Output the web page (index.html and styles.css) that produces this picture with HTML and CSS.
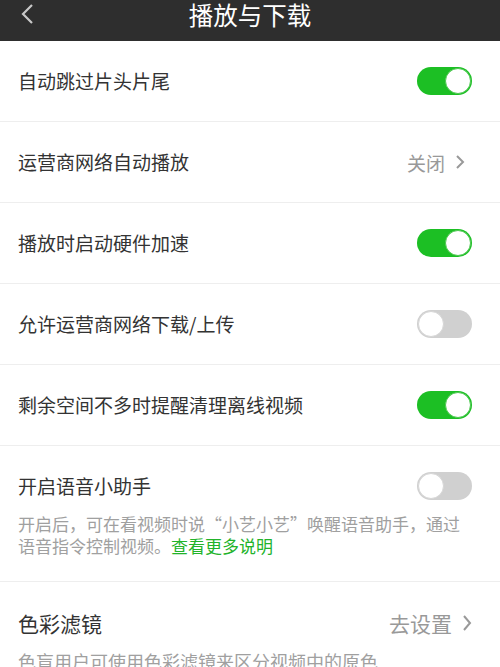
FILE: index.html
```html
<!DOCTYPE html>
<html>
<head>
    <title>播放与下载</title>
    <link rel="stylesheet" href="styles.css">
</head>
<body>
    <div class="header">
        <svg class="back" width="14" height="22" viewBox="0 0 14 22">
            <polyline points="12,2 3,11 12,20" fill="none" stroke="#c8c8c8" stroke-width="2.2"/>
        </svg>
        <span class="title">播放与下载</span>
    </div>

    <div class="row">
        <span class="label">自动跳过片头片尾</span>
        <span class="switch on"></span>
    </div>
    <div class="row">
        <span class="label">运营商网络自动播放</span>
        <span class="value">关闭
            <svg class="arrow" width="10" height="16" viewBox="0 0 10 16">
                <polyline points="2,2 8,8 2,14" fill="none" stroke="#999" stroke-width="2"/>
            </svg>
        </span>
    </div>
    <div class="row">
        <span class="label">播放时启动硬件加速</span>
        <span class="switch on"></span>
    </div>
    <div class="row">
        <span class="label">允许运营商网络下载/上传</span>
        <span class="switch"></span>
    </div>
    <div class="row">
        <span class="label">剩余空间不多时提醒清理离线视频</span>
        <span class="switch on"></span>
    </div>
    <div class="row tall">
        <div class="row-head">
            <span class="label">开启语音小助手</span>
            <span class="switch"></span>
        </div>
        <p class="desc">开启后，可在看视频时说“小艺小艺”唤醒语音助手，通过语音指令控制视频。<span class="link">查看更多说明</span></p>
    </div>
    <div class="row tall last">
        <div class="row-head">
            <span class="label big">色彩滤镜</span>
            <span class="value big">去设置
                <svg class="arrow" width="10" height="18" viewBox="0 0 10 18">
                    <polyline points="2,2 8,9 2,16" fill="none" stroke="#999" stroke-width="2"/>
                </svg>
            </span>
        </div>
        <p class="desc">色盲用户可使用色彩滤镜来区分视频中的原色</p>
    </div>
</body>
</html>
```

FILE: styles.css
```css
html, body {
    margin: 0;
    padding: 0;
    background: #fff;
    font-family: "Noto Sans CJK SC", "Noto Sans", sans-serif;
    color: #333;
}

.header {
    height: 41px;
    background: #2e2e2e;
    position: relative;
    display: flex;
    justify-content: center;
}

.header .back {
    position: absolute;
    left: 20px;
    top: 3px;
}

.title {
    color: #fff;
    font-size: 24.5px;
    line-height: 30px;
}

.row {
    height: 80px;
    border-bottom: 1px solid #eeeeee;
    display: flex;
    align-items: center;
    justify-content: space-between;
    padding: 0 28px 0 18px;
}

.row.tall {
    height: auto;
    display: block;
    padding-top: 26px;
    padding-bottom: 24px;
}

.row.last {
    padding-top: 27px;
    border-bottom: none;
}

.row-head {
    display: flex;
    align-items: center;
    justify-content: space-between;
    height: 28px;
}

.label {
    font-size: 19px;
    line-height: 28px;
}

.label.big {
    font-size: 21px;
}

.value {
    font-size: 19px;
    color: #999;
    display: flex;
    align-items: center;
    gap: 10px;
    margin-right: 7px;
}

.value.big {
    font-size: 21px;
    margin-right: 0;
}

.switch {
    width: 55px;
    height: 28px;
    border-radius: 14px;
    background: #d0d0d0;
    position: relative;
    box-sizing: border-box;
}

.switch::after {
    content: "";
    position: absolute;
    top: 1px;
    left: 1px;
    width: 26px;
    height: 26px;
    border-radius: 50%;
    background: #fff;
    box-sizing: border-box;
    border: 1px solid #d6d6d6;
}

.switch.on {
    background: #1cbf24;
}

.switch.on::after {
    left: auto;
    right: 1px;
    border-color: #4cc84f;
}

.desc {
    margin: 13px 0 0;
    font-size: 17px;
    line-height: 22px;
    color: #a0a0a0;
}

.last .desc {
    font-size: 18px;
}

.link {
    color: #22b32a;
}
```
